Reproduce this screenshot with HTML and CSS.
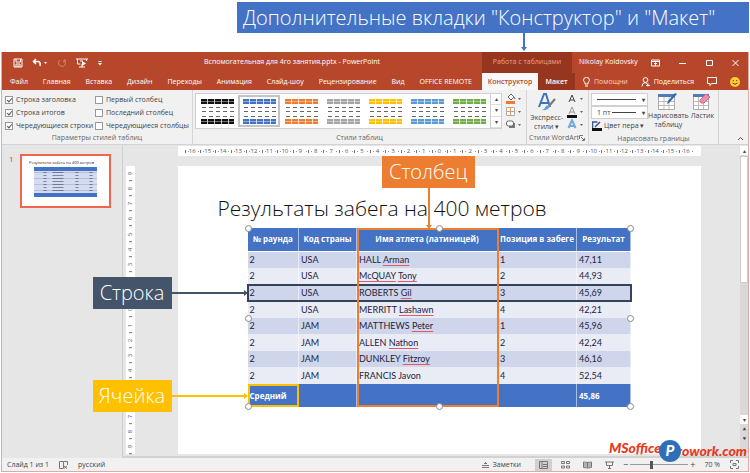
FILE: index.html
```html
<!DOCTYPE html>
<html lang="ru">
<head>
<meta charset="utf-8">
<title>PowerPoint</title>
<link rel="stylesheet" href="styles.css">
</head>
<body>
<div class="banner">
  <div class="banner-text">Дополнительные вкладки "Конструктор" и "Макет"</div>
  <span class="arrow arrow-down arrow-blue"></span>
</div>
<div class="app">
  <header class="titlebar">
    <div class="quick">
      <button aria-label="Сохранить"><svg width="10" height="10" viewBox="0 0 10 10"><path d="M1 1h8v8H1zM3 1v3h4.500V1M3 9V6h4v3M5 7v2"/></svg></button>
      <button aria-label="Отменить"><svg width="16" height="10" viewBox="0 0 16 10"><path stroke-width="1.500" d="M4 1L1.500 3.500L4 6M1.500 3.500H6Q9 4 8 8"/><path class="solid" d="M12 4h3l-1.500 2z"/></svg></button>
      <button class="dim" aria-label="Повторить"><svg width="10" height="10" viewBox="0 0 10 10"><path d="M3 2a3.500 3.500 0 1 0 4 0M7 5V2h2"/></svg></button>
      <button aria-label="Начать показ"><svg width="12" height="10" viewBox="0 0 12 10"><path d="M0 1h12M1.500 1v5h3M6 6v3M3 9h6M10.500 1v2M4 3h3"/><path class="solid" d="M6 3l4 2.500L6 8z"/></svg></button>
      <button aria-label="Настройка панели"><svg width="6" height="10" viewBox="0 0 6 10"><path d="M1.500 3.500h3"/><path class="solid" d="M1 5h4L3 7.500z"/></svg></button>
    </div>
    <div class="doc-title">Вспомогательная для 4го занятия.pptx - PowerPoint</div>
    <div class="context-title">Работа с таблицами</div>
    <div class="user">Nikolay Koldovsky</div>
    <div class="window-buttons">
      <button aria-label="Параметры ленты"><svg width="9" height="8" viewBox="0 0 9 8"><path d="M.5 1h8v6h-8zM.5 2.500h8M4.500 7V4M3 5l1.500-1.500L6 5"/></svg></button>
      <button aria-label="Свернуть"><svg width="7" height="8" viewBox="0 0 7 8"><path d="M0 4.500h7"/></svg></button>
      <button aria-label="Развернуть"><svg width="7" height="8" viewBox="0 0 7 8"><path d="M.5 1.500h6v5h-6z"/></svg></button>
      <button aria-label="Закрыть"><svg width="7" height="8" viewBox="0 0 7 8"><path d="M.5 1l6 6M6.500 1l-6 6"/></svg></button>
    </div>
  </header>
  <nav class="tabs">
    <div class="main-tabs">
      <button>Файл</button><button>Главная</button><button>Вставка</button><button>Дизайн</button><button>Переходы</button><button>Анимация</button><button>Слайд-шоу</button><button>Рецензирование</button><button>Вид</button><button>OFFICE REMOTE</button>
    </div>
    <button class="tab-active">Конструктор</button>
    <button class="tab-context">Макет</button>
    <div class="tab-tools">
      <button class="help"><svg width="7" height="10" viewBox="0 0 7 10"><path d="M2 7V5.500Q.5 4.500.5 3.200a3 2.800 0 0 1 6 0Q6.500 4.500 5 5.500V7zM2 9h3"/></svg>Помощни</button>
      <button><svg width="9" height="10" viewBox="0 0 9 10"><circle cx="4.500" cy="3" r="2.400"/><path d="M1 9.500Q1 6 4 5.500Q6 6 7 8M5 8.500h4M7 6.500v3"/></svg>Поделиться</button>
      <button aria-label="Примечания"><svg width="10" height="9" viewBox="0 0 10 9"><path d="M.5.5h9v6h-5L3 8.500v-2H.5z"/></svg></button>
      <button aria-label="Отзыв"><svg width="10" height="10" viewBox="0 0 10 10"><circle cx="5" cy="5" r="5" fill="#fc3" stroke="none"/><path stroke="#674616" d="M3.300 3v1.200M6.700 3v1.200M2.500 6q2.500 2.500 5 0"/></svg></button>
    </div>
  </nav>
  <section class="ribbon">
    <div class="group group-options">
      <div class="checks">
        <label><input type="checkbox" checked>Строка заголовка</label>
        <label><input type="checkbox">Первый столбец</label>
        <label><input type="checkbox" checked>Строка итогов</label>
        <label><input type="checkbox">Последний столбец</label>
        <label><input type="checkbox" checked>Чередующиеся строки</label>
        <label><input type="checkbox">Чередующиеся столбцы</label>
      </div>
      <div class="group-name">Параметры стилей таблиц</div>
    </div>
    <div class="group group-styles">
      <div class="row">
        <div class="gallery">
          <button class="style black" aria-label="Стиль 1"><i></i></button>
          <button class="style blue selected" aria-label="Стиль 2"><i></i></button>
          <button class="style orange" aria-label="Стиль 3"><i></i></button>
          <button class="style gray" aria-label="Стиль 4"><i></i></button>
          <button class="style yellow" aria-label="Стиль 5"><i></i></button>
          <button class="style sky" aria-label="Стиль 6"><i></i></button>
          <button class="style green" aria-label="Стиль 7"><i></i></button>
          <div class="gallery-scroll"><button aria-label="Вверх">▴</button><button aria-label="Вниз">▾</button><button aria-label="Ещё">▾</button></div>
        </div>
        <div class="icon-stack">
          <button aria-label="Заливка"><svg width="17" height="11" viewBox="0 0 17 11"><path d="M3 4l3-3 3 3-3 3zM9 4l1 2" fill="#fff" stroke="#666"/><path d="M1 8h9v3H1z" fill="#ed7d31"/><path d="M13 5h3l-1.500 2z" fill="#666"/></svg></button>
          <button aria-label="Границы"><svg width="17" height="11" viewBox="0 0 17 11"><path d="M1.500 1.500h8v8h-8z" fill="#fff" stroke="#aaa"/><path d="M5.500 1v9M1 5.500h9" stroke="#e39a6b"/><path d="M13 5h3l-1.500 2z" fill="#666"/></svg></button>
          <button aria-label="Эффекты"><svg width="17" height="11" viewBox="0 0 17 11"><path d="M4 4h6v5H4z" fill="#777"/><rect x="1.500" y="2" width="7" height="5" rx="2" fill="#fff" stroke="#666"/><path d="M13 5h3l-1.500 2z" fill="#666"/></svg></button>
        </div>
      </div>
      <div class="group-name">Стили таблиц</div>
    </div>
    <div class="group group-wordart">
      <div class="row">
        <button class="big"><svg width="18" height="19" viewBox="0 0 18 19"><path d="M1 14L6 1h2l4 13M3 10h7" fill="none" stroke="#3f74b8" stroke-width="2"/><path d="M17 6l-6 7" stroke="#777" stroke-width="2"/><path d="M12 12q-1 6-8 5 3-1 4-4z" fill="#5b9bd5"/></svg><span>Экспресс-<br>стили ▾</span></button>
        <div class="icon-stack">
          <button aria-label="Заливка текста"><svg width="17" height="11" viewBox="0 0 17 11"><path d="M2 9L5 2l3 7M3 7h4" stroke="#444" fill="none"/><path d="M13 5h3l-1.500 2z" fill="#666"/></svg></button>
          <button aria-label="Контур текста"><svg width="17" height="12" viewBox="0 0 17 12"><path d="M2 8L5 1l3 7M3 6h4" stroke="#999" fill="none"/><path d="M0 9h10v3H0z" fill="#111"/><path d="M13 5h3l-1.500 2z" fill="#666"/></svg></button>
          <button aria-label="Эффекты текста"><svg width="17" height="11" viewBox="0 0 17 11"><path d="M1.500 9L5 1l3.500 8M3 7h4" stroke="#76a8dc" stroke-width="2" fill="none"/><path d="M13 5h3l-1.500 2z" fill="#666"/></svg></button>
        </div>
      </div>
      <div class="group-name with-launcher">Стили WordArt<svg class="launcher" width="6" height="6" viewBox="0 0 6 6"><path d="M.5 4V.5H4M2 2l3 3M5.500 3v2.500H3" fill="none" stroke="#777"/></svg></div>
    </div>
    <div class="group group-borders">
      <div class="row">
        <div class="pen">
          <button class="combo" aria-label="Стиль пера"><hr><b>▾</b></button>
          <button class="combo" aria-label="Толщина пера">1 пт<hr><b>▾</b></button>
          <button class="pen-color"><svg width="10" height="10" viewBox="0 0 10 10"><path d="M.5 7V1h5M3 6l5-5" fill="none" stroke="#345a91" stroke-width="1.500"/><path d="M0 7h10v3H0z" fill="#111"/></svg>Цвет пера ▾</button>
        </div>
        <button class="big"><svg width="20" height="17" viewBox="0 0 20 17"><path d="M.5 1.500h16v15H.5z" fill="#fff" stroke="#aaa"/><path d="M0 1h17v3H0z" fill="#4f7cb4"/><path d="M1 8.500h15M1 12.500h15M6 4v12M11 4v12" stroke="#bbb"/><path d="M19 1l-8 9-2 1 1-3 7-8z" fill="#2f6aac"/></svg><span>Нарисовать<br>таблицу</span></button>
        <button class="big"><svg width="18" height="17" viewBox="0 0 18 17"><path d="M.5 1.500h15v15H.5z" fill="#fff" stroke="#aaa"/><path d="M0 1h16v3H0z" fill="#4f7cb4"/><path d="M1 8.500h14M1 12.500h14M5.500 4v12M10.500 4v12" stroke="#bbb"/><path d="M7 7l6-6 4 3-6 6H8z" fill="#ef8fa5" stroke="#d8657f"/></svg><span>Ластик</span></button>
      </div>
      <div class="group-name">Нарисовать границы</div>
    </div>
    <button class="collapse" aria-label="Свернуть ленту"><svg width="7" height="5" viewBox="0 0 7 5"><path d="M1 4l2.500-2.500L6 4" fill="none" stroke="#555"/></svg></button>
  </section>
  <main class="workspace">
    <aside class="thumbs">
      <span class="thumb-number">1</span>
      <div class="thumb">
        <p>Результаты забега на 400 метров</p>
        <svg viewBox="0 0 63 30" preserveAspectRatio="none"><rect width="63" height="30" fill="#d5dcf0"/><path d="M0 2h63M0 28h63" stroke="#4472c4" stroke-width="4"/><path d="M0 5.500h63M0 11.500h63M0 17.500h63M0 23.500h63" stroke="#b3c0e2"/><path d="M11 5v21M43 5v21M57 5v21" stroke="#333d60" stroke-width="3" stroke-dasharray="1 2" opacity=".55"/><path d="M24 5v21" stroke="#333d60" stroke-width="11" stroke-dasharray="1 2" opacity=".55"/></svg>
      </div>
    </aside>
    <div class="editor">
      <div class="ruler ruler-h" data-max="16"></div>
      <div class="ruler ruler-v" data-max="9"></div>
      <article class="slide">
        <h1>Результаты забега на 400 метров</h1>
        <div class="table-frame">
          <table>
            <colgroup><col class="c-round"><col class="c-country"><col class="c-name"><col class="c-place"><col class="c-result"></colgroup>
            <thead><tr><th>№ раунда</th><th>Код страны</th><th>Имя атлета (латиницей)</th><th>Позиция в забеге</th><th>Результат</th></tr></thead>
            <tbody>
              <tr><td>2</td><td>USA</td><td>HALL <u>Arman</u></td><td>1</td><td>47,11</td></tr>
              <tr><td>2</td><td>USA</td><td><u>McQUAY</u> <u>Tony</u></td><td>2</td><td>44,93</td></tr>
              <tr class="row-mark"><td>2</td><td>USA</td><td>ROBERTS <u>Gil</u></td><td>3</td><td>45,69</td></tr>
              <tr><td>2</td><td>USA</td><td>MERRITT <u>Lashawn</u></td><td>4</td><td>42,21</td></tr>
              <tr><td>2</td><td>JAM</td><td>MATTHEWS <u>Peter</u></td><td>1</td><td>45,96</td></tr>
              <tr><td>2</td><td>JAM</td><td>ALLEN <u>Nathon</u></td><td>2</td><td>42,24</td></tr>
              <tr><td>2</td><td>JAM</td><td>DUNKLEY <u>Fitzroy</u></td><td>3</td><td>46,16</td></tr>
              <tr><td>2</td><td>JAM</td><td>FRANCIS Javon</td><td>4</td><td>52,54</td></tr>
            </tbody>
            <tfoot><tr><td class="cell-mark">Средний</td><td></td><td></td><td></td><td>45,86</td></tr></tfoot>
          </table>
          <div class="column-mark"></div>
          <i class="handle top left"></i><i class="handle top center"></i><i class="handle top right"></i>
          <i class="handle middle left"></i><i class="handle middle right"></i>
          <i class="handle bottom left"></i><i class="handle bottom center"></i><i class="handle bottom right"></i>
          <div class="callout callout-column"><span>Столбец</span><i class="arrow arrow-down"></i></div>
          <div class="callout callout-row"><span>Строка</span><i class="arrow arrow-right"></i></div>
          <div class="callout callout-cell"><span>Ячейка</span><i class="arrow arrow-right"></i></div>
        </div>
      </article>
      <div class="scrollbar"><button aria-label="Прокрутить вверх">▴</button><i></i><button aria-label="Прокрутить вниз">▾</button><button class="plain" aria-label="Предыдущий слайд">⯅</button><button class="plain" aria-label="Следующий слайд">⯆</button></div>
      <div class="logo"><span class="logo-left">MSoffice</span><span class="logo-disc">P</span><span class="logo-right">rowork.com</span></div>
    </div>
  </main>
  <footer class="status">
    <span>Слайд 1 из 1</span>
    <button aria-label="Правописание"><svg width="9" height="8" viewBox="0 0 9 8"><path d="M4 7.500H.5v-7h4v7M4.500.5h4V4M5 5l3 2.500M8 5L5 7.500"/></svg></button>
    <span>русский</span>
    <button class="notes"><svg width="7" height="8" viewBox="0 0 7 8"><path d="M0 4.500h7M0 6.500h7M2 2.500h3M3.500 1v2"/></svg>Заметки</button>
    <div class="views">
      <button class="current" aria-label="Обычный"><svg width="9" height="8" viewBox="0 0 9 8"><path d="M.5.5h8v7h-8zM3 1v6M4 3.500h4M4 5.500h4"/></svg></button>
      <button aria-label="Сортировщик"><svg width="9" height="8" viewBox="0 0 9 8"><path d="M.5.5h3v2h-3zM5.500.5h3v2h-3zM.5 5h3v2h-3zM5.500 5h3v2h-3z"/></svg></button>
      <button aria-label="Чтение"><svg width="9" height="8" viewBox="0 0 9 8"><path d="M4.500 1.500L.5 1v5.500l4 .5 4-.5V1zM4.500 1v6M1 3h3M5 3h3M1 5h3M5 5h3"/></svg></button>
      <button aria-label="Показ слайдов"><svg width="9" height="8" viewBox="0 0 9 8"><path d="M0 1h9M1.500 1v3.500h6V1M4.500 4.500v3M3 7.500h3"/></svg></button>
    </div>
    <div class="zoom"><button aria-label="Уменьшить">−</button><input type="range" min="10" max="180" value="70" aria-label="Масштаб"><button aria-label="Увеличить">+</button></div>
    <span class="percent">70 %</span>
    <button aria-label="Вписать слайд"><svg width="9" height="9" viewBox="0 0 9 9"><path d="M.5 3V.5H3M6 .5h2.500V3M8.500 6v2.500H6M3 8.500H.5V6M3 3.500h3v2H3z"/></svg></button>
  </footer>
</div>
<script src="ruler.js"></script>
</body>
</html>
```
FILE: styles.css
```css
* { box-sizing: border-box; }
body {
  margin: 0;
  min-height: 100vh;
  display: flex;
  flex-direction: column;
  background: #fff;
  font: 7px/10px "Open Sans", "Noto Sans", sans-serif;
  color: #444;
}
button {
  border: 0;
  padding: 0;
  background: none;
  font: inherit;
  color: inherit;
  display: flex;
  align-items: center;
  justify-content: center;
  white-space: nowrap;
}
svg { flex: none; display: block; }

/* Annotations */
.banner { position: relative; padding: 2px 1px 0 237px; height: 52px; }
.banner-text {
  height: 31px;
  padding-left: 6px;
  background: #4472c4;
  color: #fff;
  font-size: 20px;
  font-weight: 300;
  line-height: 31px;
  white-space: nowrap;
}
.arrow { position: absolute; background: currentColor; }
.arrow::after { content: ""; position: absolute; border: 3px solid transparent; }
.arrow-down { width: 2px; }
.arrow-down::after { left: -2px; bottom: -1px; border-top: 4px solid currentColor; border-bottom: 0; }
.arrow-right { height: 2px; }
.arrow-right::after { top: -2px; right: -1px; border-left: 4px solid currentColor; border-right: 0; }
.arrow-blue { color: #4472c4; left: 523px; top: 33px; height: 17px; }

/* Window */
.app {
  flex: 1;
  display: flex;
  flex-direction: column;
  margin: 0 1px 1px;
  border: solid #e3a99f;
  border-width: 0 1px 1px;
  background: #e6e6e6;
}
.titlebar, .tabs { display: flex; background: #b7472a; color: #fff; }
.titlebar { height: 21px; align-items: stretch; }
.titlebar svg, .tabs svg { fill: none; stroke: #fff; }
.titlebar .solid { fill: #fff; stroke: none; }
.quick { display: flex; align-items: center; gap: 9px; padding-left: 11px; width: 110px; }
.dim { opacity: .35; }
.doc-title { flex: 1; padding-left: 92px; line-height: 20px; white-space: nowrap; }
.context-title { width: 90px; background: #97361e; color: #e9a08c; text-align: center; line-height: 20px; }
.user { width: 78px; padding-left: 7px; line-height: 20px; white-space: nowrap; }
.window-buttons { width: 98px; display: flex; justify-content: space-between; padding: 0 9px 0 1px; }

.tabs { height: 17px; }
.main-tabs { flex: 1; display: flex; justify-content: space-between; padding: 0 10px 0 8px; }
.tab-active { width: 56px; background: #f8f8f8; color: #b7472a; font-weight: 600; }
.tab-context { width: 37px; background: #97361e; font-weight: 600; }
.tab-tools { width: 173px; display: flex; justify-content: space-between; padding: 0 8px; }
.tab-tools button { gap: 4px; }
.help { color: #f4cfc5; }

/* Ribbon */
.ribbon { display: flex; height: 55px; background: #f1f1f1; border-bottom: 1px solid #d2d2d2; position: relative; }
.group { display: flex; flex-direction: column; justify-content: space-between; padding: 3px 2px 0; border-right: 1px solid #d5d5d5; }
.group-name { text-align: center; line-height: 12px; color: #666; position: relative; white-space: nowrap; }
.group-options { width: 191px; }
.group-styles { flex: 1; }
.group-wordart { width: 62px; }
.with-launcher { display: flex; align-items: center; justify-content: space-between; }
.group-borders { width: 130px; }
.row { display: flex; }
.checks { display: grid; grid-template-columns: 90px 1fr; grid-auto-rows: 13px; padding-left: 1px; }
.checks label { display: flex; align-items: center; gap: 3px; white-space: nowrap; }
.checks input { appearance: none; margin: 0; width: 8px; height: 8px; border: 1px solid #999; background: #fff; }
.checks input:checked::after { content: ""; display: block; width: 2px; height: 4px; margin-left: 2px; border: solid #555; border-width: 0 1px 1px 0; rotate: 40deg; }
.gallery { flex: 1; height: 36px; display: flex; align-items: center; border: 1px solid #d0d0d0; background: #fff; }
.style { flex: 1; height: 32px; border: 2px solid transparent; }
.style.selected { border-color: #c3c3c3; }
.style i {
  width: 33px;
  height: 25px;
  background:
    linear-gradient(#fff6 0 0) 0 2px / 100% 1px no-repeat,
    linear-gradient(#fff6 0 0) 0 22px / 100% 1px no-repeat,
    repeating-linear-gradient(90deg, transparent 0 6px, #fffb 6px 7px),
    linear-gradient(currentColor 0 0) 0 0 / 100% 5px no-repeat,
    linear-gradient(currentColor 0 0) 0 100% / 100% 5px no-repeat,
    repeating-linear-gradient(90deg, #fff 0 1px, transparent 1px 5px, #fff 5px 7px),
    linear-gradient(#666 0 0) 0 8px / 100% 1px no-repeat,
    linear-gradient(#666 0 0) 0 12px / 100% 1px no-repeat,
    linear-gradient(#666 0 0) 0 17px / 100% 1px no-repeat;
}
.black { color: #111; }
.blue { color: #4472c4; }
.orange { color: #ed7d31; }
.gray { color: #a5a5a5; }
.yellow { color: #ffc000; }
.sky { color: #5b9bd5; }
.green { color: #70ad47; }
.gallery-scroll { width: 11px; height: 34px; display: flex; flex-direction: column; border-left: 1px solid #d0d0d0; }
.gallery-scroll button { flex: 1; border-bottom: 1px solid #ddd; font-size: 6px; line-height: 6px; }
.icon-stack { width: 22px; height: 37px; display: flex; flex-direction: column; justify-content: space-between; align-items: center; }
.group-wordart .big { width: 36px; }
.big { flex-direction: column; justify-content: flex-start; gap: 1px; line-height: 9px; height: 38px; }
.pen { width: 57px; }
.combo { width: 57px; height: 13px; padding: 0 2px 0 5px; gap: 2px; background: #fff; border: 1px solid #d0d0d0; }
.combo hr { flex: 1; margin: 0; border: 0; border-top: 1px solid #444; }
.combo b { font-size: 6px; padding-left: 4px; }
.pen-color { height: 14px; gap: 2px; padding-left: 1px; }
.group-borders .big { width: 42px; }
.group-borders .big + .big { width: 28px; }
.launcher { margin-right: 1px; }
.collapse { align-self: flex-end; margin-left: auto; padding: 0 4px 3px 0; width: 29px; justify-content: flex-end; }

/* Workspace */
.workspace { flex: 1; display: flex; }
.thumbs { width: 121px; padding: 9px 0 0 7px; display: flex; align-items: flex-start; gap: 6px; border-right: 1px solid #cdcdcd; }
.thumb-number { width: 5px; font-size: 8px; color: #d24726; }
.thumb { width: 91px; height: 54px; border: 2px solid #f0654e; background: #fff; padding: 4px 0 0 7px; }
.thumb p { margin: 0 0 1px; font-size: 4px; line-height: 6px; color: #222; white-space: nowrap; }
.thumb svg { width: 63px; height: 30px; margin-left: 5px; }
.editor {
  flex: 1;
  position: relative;
  display: grid;
  grid-template: 10px 1fr / 9px 1fr 8px;
  row-gap: 10px;
  padding: 1px 0 2px 3px;
  border-bottom: 2px solid #d2d2d2;
}
.ruler { background: #fff; display: flex; font-size: 6px; line-height: 10px; color: #555; }
.ruler span {
  flex: 1;
  text-align: center;
  background:
    linear-gradient(#777 0 0) 0 50% / 1px 3px no-repeat,
    linear-gradient(#999 0 0) 3px 50% / 1px 1px no-repeat,
    linear-gradient(#999 0 0) 13px 50% / 1px 1px no-repeat;
}
.ruler-h { grid-area: 1 / 2; margin: 0 39px 0 43px; padding: 0 7px; }
.ruler-v { grid-area: 2 / 1; flex-direction: column; }
.ruler-v span {
  writing-mode: vertical-rl;
  rotate: 180deg;
  line-height: 9px;
  background: linear-gradient(#777 0 0) 50% 0 / 3px 1px no-repeat;
}
.slide { grid-area: 2 / 2; margin: 0 39px 0 43px; padding: 27px 70px 0; background: #fff; }
.slide h1 {
  margin: 0 0 5px -30px;
  font-size: 21px;
  line-height: 30px;
  font-weight: 300;
  color: #111;
  white-space: nowrap;
}
.table-frame { position: relative; z-index: 1; }
table { width: 100%; height: 179px; table-layout: fixed; border-collapse: collapse; color: #1c2440; }
.c-round { width: 51px; }
.c-country { width: 58px; }
.c-name { width: 141px; }
.c-place { width: 79px; }
.c-result { width: 54px; }
th, tfoot td { height: 23px; background: #4472c4; color: #fff; font-weight: 700; font-size: 8px; }
th { text-align: center; border-bottom: 1px solid #fff; }
th, td { padding: 0 2px; white-space: nowrap; line-height: 12px; border-right: 1px solid #fff8; }
tbody td { font-family: Lato, "Open Sans", sans-serif; font-size: 9px; }
tbody tr { background: #e9ebf5; }
tbody tr:nth-child(odd) { background: #cfd5ea; }
u { text-decoration: underline #e05a6a 1px; text-underline-offset: 2px; }
.row-mark { outline: 2px solid #33435a; outline-offset: -1px; }
.cell-mark { outline: 2px solid #ffc000; outline-offset: -2px; }
.column-mark { position: absolute; left: 28.5%; width: 37%; top: 0; bottom: 0; border: 2px solid #ed7d31; }
.handle { position: absolute; width: 7px; height: 7px; margin: -3px; border: 1px solid #888; border-radius: 50%; background: #fff; }
.top { top: 0; }
.middle { top: 50%; }
.bottom { bottom: 0; }
.left { left: 0; }
.center { left: 50%; }
.right { right: 0; }
.callout { position: absolute; }
.callout span { display: block; height: 32px; line-height: 32px; font-size: 20px; font-weight: 300; text-align: center; }
.callout-column { width: 93px; left: 35%; top: -72px; color: #ed7d31; }
.callout-column span { background: #ed7d31; color: #fff; }
.callout-column .arrow { left: 46px; top: 32px; height: 40px; }
.callout-row, .callout-cell { width: 79px; left: -155px; }
.callout-row .arrow, .callout-cell .arrow { left: 79px; top: 15px; width: 75px; }
.callout-row { top: 49px; color: #44546a; }
.callout-row span { background: #44546a; color: #fff; }
.callout-cell { top: 152px; color: #ffc000; }
.callout-cell span { background: #ffc000; color: #fff; }

.scrollbar { grid-area: 1 / 3 / 3 / 4; display: flex; flex-direction: column; background: #d9d9d9; padding-bottom: 10px; }
.scrollbar i { height: 127px; margin: 1px 0 auto; background: #fff; border: 1px solid #ccc; }
.scrollbar button { height: 9px; background: #fff; font-size: 6px; line-height: 6px; }
.scrollbar .plain { background: none; height: 10px; }
.logo {
  position: absolute;
  z-index: 2;
  right: 1px;
  bottom: -8px;
  display: flex;
  align-items: center;
  color: #e8391d;
  font: italic 900 14px/20px Lato, "Open Sans", sans-serif;
}
.logo-left { padding-bottom: 6px; }
.logo-disc { width: 22px; height: 22px; margin: 0 -4px 0 -2px; border-radius: 50%; background: #2e6fba; color: #fff; text-align: center; font-size: 15px; line-height: 21px; z-index: 1; }

/* Status bar */
.status { height: 13px; display: flex; align-items: center; padding: 0 2px 0 5px; background: #f1f1f1; white-space: nowrap; }
.status svg { fill: none; stroke: #777; }
.status > span { margin-right: 10px; }
.status > button { margin-right: 10px; }
.status .notes { margin-left: auto; margin-right: 14px; gap: 4px; }
.views { display: flex; gap: 5px; }
.views button { width: 17px; height: 12px; }
.views .current { background: #d0d0d0; }
.zoom { display: flex; align-items: center; gap: 2px; margin: 0 9px 0 5px; font-size: 9px; }
.zoom input { appearance: none; width: 58px; height: 9px; margin: 0; background: linear-gradient(#999 0 0) 0 50% / 100% 1px no-repeat; }
.zoom input::-webkit-slider-thumb { appearance: none; width: 3px; height: 8px; background: #555; }
.status > button:last-child { margin-right: 7px; }
```
FILE: ruler.js
```js
// Fills each ruler with centimetre marks counted outwards from zero.
document.querySelectorAll(".ruler").forEach(function (ruler) {
  var max = Number(ruler.dataset.max);
  for (var n = -max; n <= max; n++) {
    var mark = document.createElement("span");
    mark.textContent = Math.abs(n);
    ruler.appendChild(mark);
  }
});
```
